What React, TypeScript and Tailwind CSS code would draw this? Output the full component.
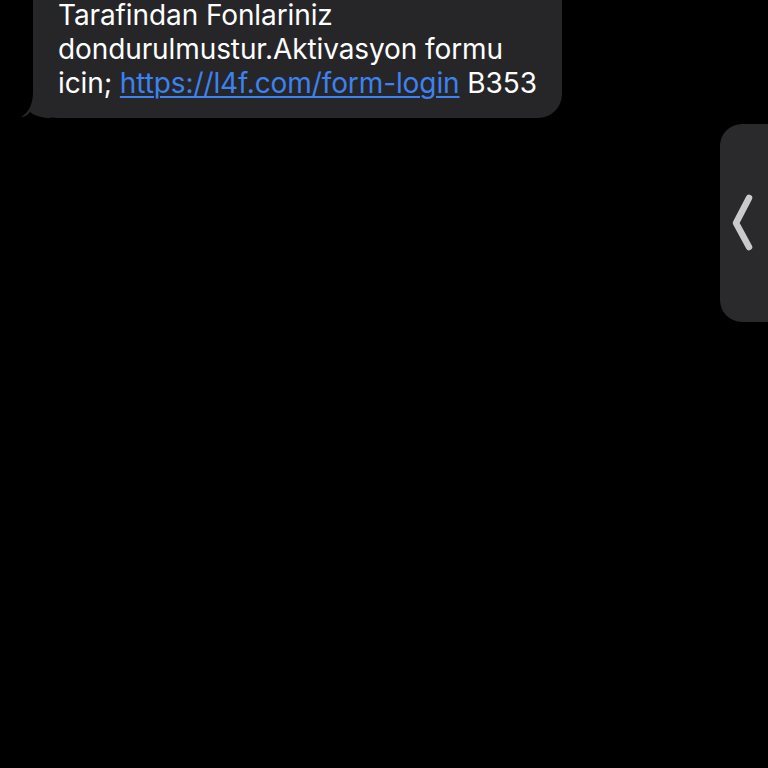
import React from 'react';

const BUBBLE = '#262628';

function Tail() {
  // little hook at the bubble's bottom-left corner
  return (
    <svg
      className="absolute bottom-0 left-[-12px]"
      width="30"
      height="26"
      viewBox="0 0 30 26"
      aria-hidden
    >
      <path d="M12 0 L30 0 L30 26 C22 26 14 24 9 20 C6 24 3 25 0 25 C8 20 12 12 12 0 Z" fill={BUBBLE} />
    </svg>
  );
}

function SidePull() {
  return (
    <div className="absolute right-0 top-[124px] flex h-[198px] w-[48px] items-center justify-center rounded-l-[22px] bg-[#2a2a2c]">
      <svg width="22" height="60" viewBox="0 0 22 60" className="mr-[2px]" aria-hidden>
        <path d="M17 5 L4 30 L17 54" fill="none" stroke="#c9c9ce" strokeWidth="6.5" strokeLinecap="round" strokeLinejoin="round" />
      </svg>
    </div>
  );
}

export default function App() {
  return (
    <div className="relative h-[768px] w-[768px] overflow-hidden bg-black font-['Inter','Noto_Sans',sans-serif]">
      <div className="pl-[33px]">
        <div className="relative -mt-[40px] w-[529px] rounded-[24px] bg-[#262628] pl-[25px] pr-[20px] pt-[38px] pb-[18px]">
          <Tail />
          <p className="relative text-[28px] leading-[34px] tracking-[-0.1px] text-white">
            Tarafindan Fonlariniz
            <br />
            dondurulmustur.Aktivasyon formu
            <br />
            icin;{' '}
            <span className="text-[#3d82f0] underline decoration-[1.5px] underline-offset-[3px]">
              https://l4f.com/form-login
            </span>{' '}
            B353
          </p>
        </div>
      </div>
      <SidePull />
    </div>
  );
}
